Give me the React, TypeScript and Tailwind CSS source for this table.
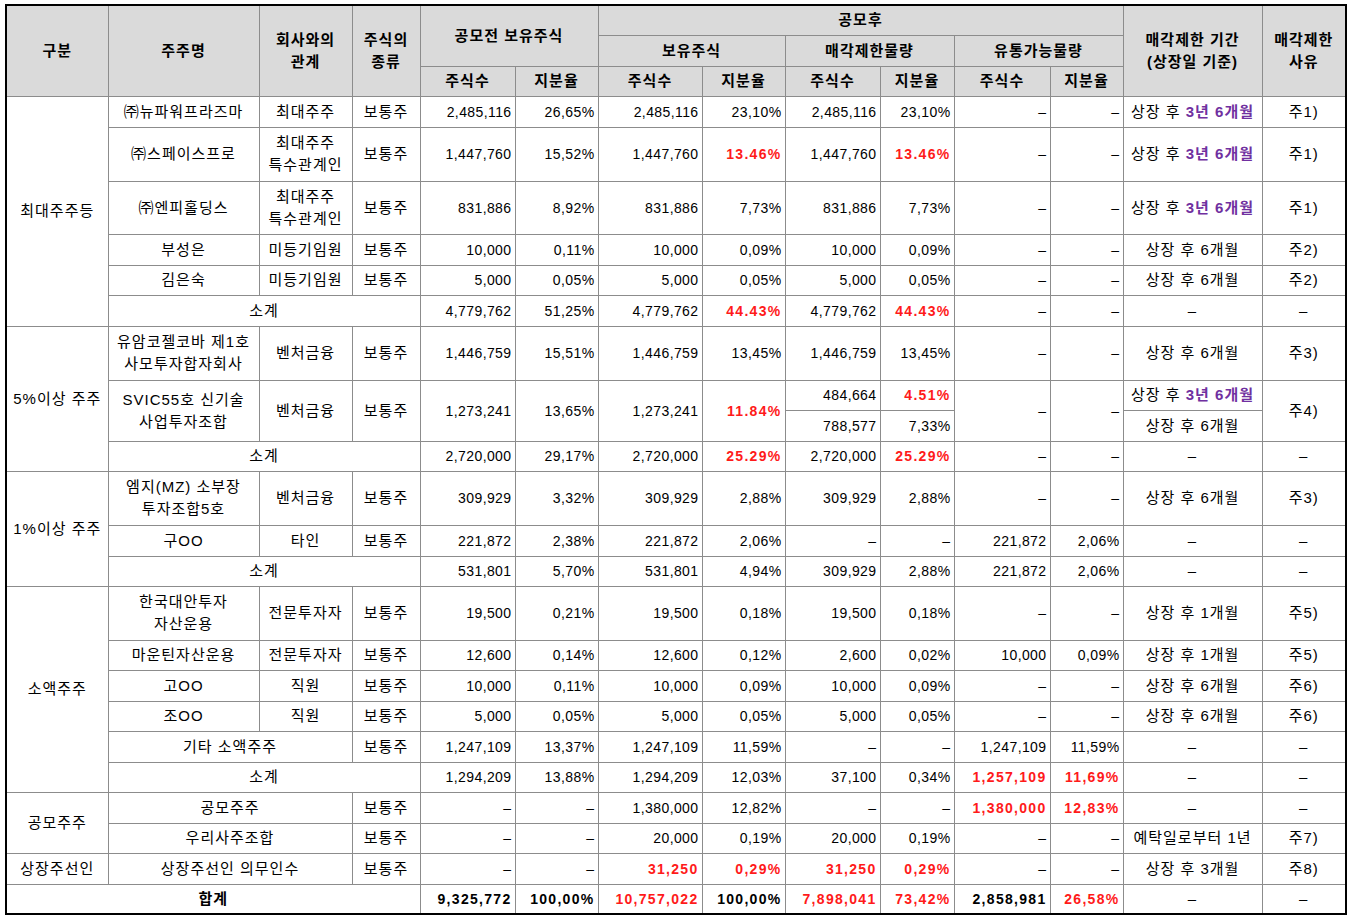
import React from 'react';

const line = 'border border-[#8c8c8c]';
const head = `${line} bg-[#dadada] font-bold text-center text-[15px] tracking-[1px]`;

function N({ children, red, bold, rs }: { children?: React.ReactNode; red?: boolean; bold?: boolean; rs?: number }) {
  return (
    <td
      rowSpan={rs}
      className={`${line} text-right pr-[3px] whitespace-nowrap ${red ? 'text-[#ff1a1a]' : 'text-black'} ${bold ? 'font-bold tracking-[1.3px]' : 'tracking-[0.4px]'}`}
    >
      {children ?? '–'}
    </td>
  );
}

function C({ children, rs, cs, bold }: { children?: React.ReactNode; rs?: number; cs?: number; bold?: boolean }) {
  return (
    <td
      rowSpan={rs}
      colSpan={cs}
      className={`${line} text-center whitespace-nowrap text-[15px] tracking-[1px] ${bold ? 'font-bold' : ''}`}
    >
      {children ?? '–'}
    </td>
  );
}

// 상장 후 3년 6개월 (purple part is bold)
const Long = () => (
  <>
    상장 후 <span className="font-bold text-[#7030a0]">3년 6개월</span>
  </>
);

const widths = [102, 151, 93, 68, 95, 83, 104, 83, 95, 74, 96, 73, 139, 84];

export default function App() {
  return (
    <div className="min-h-screen bg-white pl-[5px] pt-[4px]">
      <table className="table-fixed border-collapse border-2 border-black text-[14px] leading-[22px] text-black font-['Liberation_Sans','Noto_Sans_CJK_KR',sans-serif] w-[1342px]">
        <colgroup>
          {widths.map((w, i) => (
            <col key={i} style={{ width: w }} />
          ))}
        </colgroup>
        <thead>
          <tr className="h-[30px]">
            <th rowSpan={3} className={head}>구분</th>
            <th rowSpan={3} className={head}>주주명</th>
            <th rowSpan={3} className={head}>회사와의<br />관계</th>
            <th rowSpan={3} className={head}>주식의<br />종류</th>
            <th rowSpan={2} colSpan={2} className={head}>공모전 보유주식</th>
            <th colSpan={6} className={head}>공모후</th>
            <th rowSpan={3} className={head}>매각제한 기간<br />(상장일 기준)</th>
            <th rowSpan={3} className={head}>매각제한<br />사유</th>
          </tr>
          <tr className="h-[31px]">
            <th colSpan={2} className={head}>보유주식</th>
            <th colSpan={2} className={head}>매각제한물량</th>
            <th colSpan={2} className={head}>유통가능물량</th>
          </tr>
          <tr className="h-[30px]">
            <th className={head}>주식수</th>
            <th className={head}>지분율</th>
            <th className={head}>주식수</th>
            <th className={head}>지분율</th>
            <th className={head}>주식수</th>
            <th className={head}>지분율</th>
            <th className={head}>주식수</th>
            <th className={head}>지분율</th>
          </tr>
        </thead>
        <tbody>
          {/* 최대주주등 */}
          <tr className="h-[31px]">
            <C rs={6}>최대주주등</C>
            <C>㈜뉴파워프라즈마</C>
            <C>최대주주</C>
            <C>보통주</C>
            <N>2,485,116</N>
            <N>26,65%</N>
            <N>2,485,116</N>
            <N>23,10%</N>
            <N>2,485,116</N>
            <N>23,10%</N>
            <N />
            <N />
            <C><Long /></C>
            <C>주1)</C>
          </tr>
          <tr className="h-[54px]">
            <C>㈜스페이스프로</C>
            <C>최대주주<br />특수관계인</C>
            <C>보통주</C>
            <N>1,447,760</N>
            <N>15,52%</N>
            <N>1,447,760</N>
            <N red bold>13.46%</N>
            <N>1,447,760</N>
            <N red bold>13.46%</N>
            <N />
            <N />
            <C><Long /></C>
            <C>주1)</C>
          </tr>
          <tr className="h-[53px]">
            <C>㈜엔피홀딩스</C>
            <C>최대주주<br />특수관계인</C>
            <C>보통주</C>
            <N>831,886</N>
            <N>8,92%</N>
            <N>831,886</N>
            <N>7,73%</N>
            <N>831,886</N>
            <N>7,73%</N>
            <N />
            <N />
            <C><Long /></C>
            <C>주1)</C>
          </tr>
          <tr className="h-[31px]">
            <C>부성은</C>
            <C>미등기임원</C>
            <C>보통주</C>
            <N>10,000</N>
            <N>0,11%</N>
            <N>10,000</N>
            <N>0,09%</N>
            <N>10,000</N>
            <N>0,09%</N>
            <N />
            <N />
            <C>상장 후 6개월</C>
            <C>주2)</C>
          </tr>
          <tr className="h-[30px]">
            <C>김은숙</C>
            <C>미등기임원</C>
            <C>보통주</C>
            <N>5,000</N>
            <N>0,05%</N>
            <N>5,000</N>
            <N>0,05%</N>
            <N>5,000</N>
            <N>0,05%</N>
            <N />
            <N />
            <C>상장 후 6개월</C>
            <C>주2)</C>
          </tr>
          <tr className="h-[31px]">
            <C cs={3}>소계</C>
            <N>4,779,762</N>
            <N>51,25%</N>
            <N>4,779,762</N>
            <N red bold>44.43%</N>
            <N>4,779,762</N>
            <N red bold>44.43%</N>
            <N />
            <N />
            <C />
            <C />
          </tr>

          {/* 5%이상 주주 */}
          <tr className="h-[54px]">
            <C rs={4}>5%이상 주주</C>
            <C>유암코젤코바 제1호<br />사모투자합자회사</C>
            <C>벤처금융</C>
            <C>보통주</C>
            <N>1,446,759</N>
            <N>15,51%</N>
            <N>1,446,759</N>
            <N>13,45%</N>
            <N>1,446,759</N>
            <N>13,45%</N>
            <N />
            <N />
            <C>상장 후 6개월</C>
            <C>주3)</C>
          </tr>
          <tr className="h-[30px]">
            <C rs={2}>SVIC55호 신기술<br />사업투자조합</C>
            <C rs={2}>벤처금융</C>
            <C rs={2}>보통주</C>
            <N rs={2}>1,273,241</N>
            <N rs={2}>13,65%</N>
            <N rs={2}>1,273,241</N>
            <N rs={2} red bold>11.84%</N>
            <N>484,664</N>
            <N red bold>4.51%</N>
            <N rs={2} />
            <N rs={2} />
            <C><Long /></C>
            <C rs={2}>주4)</C>
          </tr>
          <tr className="h-[31px]">
            <N>788,577</N>
            <N>7,33%</N>
            <C>상장 후 6개월</C>
          </tr>
          <tr className="h-[30px]">
            <C cs={3}>소계</C>
            <N>2,720,000</N>
            <N>29,17%</N>
            <N>2,720,000</N>
            <N red bold>25.29%</N>
            <N>2,720,000</N>
            <N red bold>25.29%</N>
            <N />
            <N />
            <C />
            <C />
          </tr>

          {/* 1%이상 주주 */}
          <tr className="h-[54px]">
            <C rs={3}>1%이상 주주</C>
            <C>엠지(MZ) 소부장<br />투자조합5호</C>
            <C>벤처금융</C>
            <C>보통주</C>
            <N>309,929</N>
            <N>3,32%</N>
            <N>309,929</N>
            <N>2,88%</N>
            <N>309,929</N>
            <N>2,88%</N>
            <N />
            <N />
            <C>상장 후 6개월</C>
            <C>주3)</C>
          </tr>
          <tr className="h-[31px]">
            <C>구OO</C>
            <C>타인</C>
            <C>보통주</C>
            <N>221,872</N>
            <N>2,38%</N>
            <N>221,872</N>
            <N>2,06%</N>
            <N />
            <N />
            <N>221,872</N>
            <N>2,06%</N>
            <C />
            <C />
          </tr>
          <tr className="h-[30px]">
            <C cs={3}>소계</C>
            <N>531,801</N>
            <N>5,70%</N>
            <N>531,801</N>
            <N>4,94%</N>
            <N>309,929</N>
            <N>2,88%</N>
            <N>221,872</N>
            <N>2,06%</N>
            <C />
            <C />
          </tr>

          {/* 소액주주 */}
          <tr className="h-[54px]">
            <C rs={6}>소액주주</C>
            <C>한국대안투자<br />자산운용</C>
            <C>전문투자자</C>
            <C>보통주</C>
            <N>19,500</N>
            <N>0,21%</N>
            <N>19,500</N>
            <N>0,18%</N>
            <N>19,500</N>
            <N>0,18%</N>
            <N />
            <N />
            <C>상장 후 1개월</C>
            <C>주5)</C>
          </tr>
          <tr className="h-[30px]">
            <C>마운틴자산운용</C>
            <C>전문투자자</C>
            <C>보통주</C>
            <N>12,600</N>
            <N>0,14%</N>
            <N>12,600</N>
            <N>0,12%</N>
            <N>2,600</N>
            <N>0,02%</N>
            <N>10,000</N>
            <N>0,09%</N>
            <C>상장 후 1개월</C>
            <C>주5)</C>
          </tr>
          <tr className="h-[31px]">
            <C>고OO</C>
            <C>직원</C>
            <C>보통주</C>
            <N>10,000</N>
            <N>0,11%</N>
            <N>10,000</N>
            <N>0,09%</N>
            <N>10,000</N>
            <N>0,09%</N>
            <N />
            <N />
            <C>상장 후 6개월</C>
            <C>주6)</C>
          </tr>
          <tr className="h-[30px]">
            <C>조OO</C>
            <C>직원</C>
            <C>보통주</C>
            <N>5,000</N>
            <N>0,05%</N>
            <N>5,000</N>
            <N>0,05%</N>
            <N>5,000</N>
            <N>0,05%</N>
            <N />
            <N />
            <C>상장 후 6개월</C>
            <C>주6)</C>
          </tr>
          <tr className="h-[31px]">
            <C cs={2}>기타 소액주주</C>
            <C>보통주</C>
            <N>1,247,109</N>
            <N>13,37%</N>
            <N>1,247,109</N>
            <N>11,59%</N>
            <N />
            <N />
            <N>1,247,109</N>
            <N>11,59%</N>
            <C />
            <C />
          </tr>
          <tr className="h-[30px]">
            <C cs={3}>소계</C>
            <N>1,294,209</N>
            <N>13,88%</N>
            <N>1,294,209</N>
            <N>12,03%</N>
            <N>37,100</N>
            <N>0,34%</N>
            <N red bold>1,257,109</N>
            <N red bold>11,69%</N>
            <C />
            <C />
          </tr>

          {/* 공모주주 */}
          <tr className="h-[31px]">
            <C rs={2}>공모주주</C>
            <C cs={2}>공모주주</C>
            <C>보통주</C>
            <N />
            <N />
            <N>1,380,000</N>
            <N>12,82%</N>
            <N />
            <N />
            <N red bold>1,380,000</N>
            <N red bold>12,83%</N>
            <C />
            <C />
          </tr>
          <tr className="h-[30px]">
            <C cs={2}>우리사주조합</C>
            <C>보통주</C>
            <N />
            <N />
            <N>20,000</N>
            <N>0,19%</N>
            <N>20,000</N>
            <N>0,19%</N>
            <N />
            <N />
            <C>예탁일로부터 1년</C>
            <C>주7)</C>
          </tr>

          {/* 상장주선인 */}
          <tr className="h-[31px]">
            <C>상장주선인</C>
            <C cs={2}>상장주선인 의무인수</C>
            <C>보통주</C>
            <N />
            <N />
            <N red bold>31,250</N>
            <N red bold>0,29%</N>
            <N red bold>31,250</N>
            <N red bold>0,29%</N>
            <N />
            <N />
            <C>상장 후 3개월</C>
            <C>주8)</C>
          </tr>

          {/* 합계 */}
          <tr className="h-[30px]">
            <C cs={4} bold>합계</C>
            <N bold>9,325,772</N>
            <N bold>100,00%</N>
            <N red bold>10,757,022</N>
            <N bold>100,00%</N>
            <N red bold>7,898,041</N>
            <N red bold>73,42%</N>
            <N bold>2,858,981</N>
            <N red bold>26,58%</N>
            <C />
            <C />
          </tr>
        </tbody>
      </table>
    </div>
  );
}
